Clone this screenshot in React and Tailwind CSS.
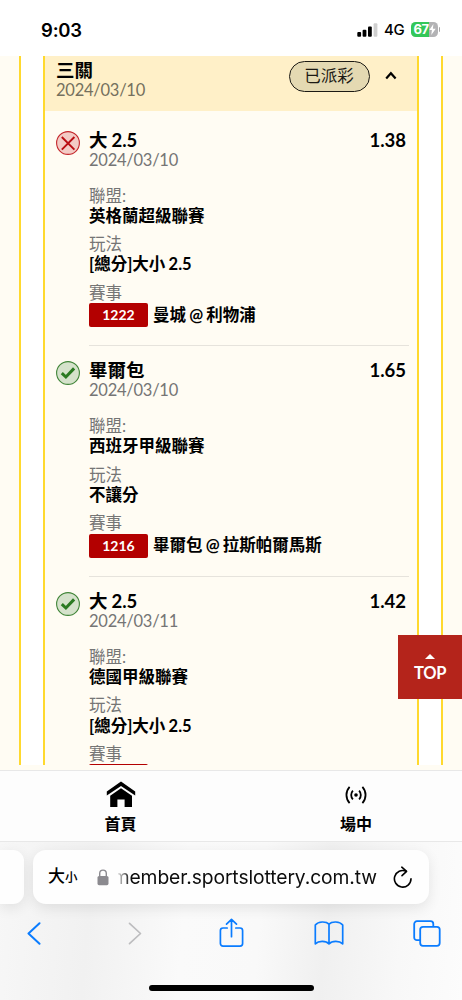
import React from "react";

const bets = [
  {
    won: false,
    title: "大 2.5",
    date: "2024/03/10",
    odds: "1.38",
    league: "英格蘭超級聯賽",
    play: "[總分]大小 2.5",
    code: "1222",
    match: "曼城 @ 利物浦",
  },
  {
    won: true,
    title: "畢爾包",
    date: "2024/03/10",
    odds: "1.65",
    league: "西班牙甲級聯賽",
    play: "不讓分",
    code: "1216",
    match: "畢爾包 @ 拉斯帕爾馬斯",
  },
  {
    won: true,
    title: "大 2.5",
    date: "2024/03/11",
    odds: "1.42",
    league: "德國甲級聯賽",
    play: "[總分]大小 2.5",
    code: "",
    match: "",
  },
];

const StatusBar = () => (
  <header className="flex h-[56px] shrink-0 items-start justify-between bg-white pl-[41px] pr-[22px] pt-[18px] font-['Inter','Liberation_Sans',sans-serif]">
    <span className="pt-[1px] text-[18.5px] font-semibold leading-[23px] tracking-[-0.2px]">9:03</span>
    <div className="flex h-[23px] items-center">
      <svg width="21" height="14" viewBox="0 0 21 14">
        <rect x="0.3" y="9" width="3.8" height="4.8" rx="1" />
        <rect x="5.6" y="6.7" width="3.8" height="7.1" rx="1" />
        <rect x="11" y="3.6" width="3.8" height="10.2" rx="1" />
        <rect x="16.6" y="0.3" width="3.8" height="13.5" rx="1" fill="#cfcfcf" />
      </svg>
      <span className="ml-[6px] text-[15px] font-medium leading-[23px] tracking-[-0.3px]">4G</span>
      <div className="ml-[6px] flex h-[15px] w-[27px] items-center rounded-[4.5px] bg-linear-to-r from-[#34c759] from-68% to-[#b3b3b5] to-68% pl-[3px]">
        <span className="text-[13px] font-bold leading-[15px] tracking-[-0.5px] text-white">67</span>
        <svg width="7" height="11" viewBox="0 0 7 11" fill="#fff">
          <path d="M4.4 0 0.3 6h2.6L2.3 11 6.7 4.7H3.9z" />
        </svg>
      </div>
      <div className="ml-[1px] h-[5px] w-[1.5px] rounded-r-full bg-[#a8a8a8]" />
    </div>
  </header>
);

const ResultIcon = ({ won }) => {
  if (won) {
    return (
      <svg width="24" height="24" viewBox="0 0 24 24" fill="none">
        <circle cx="12" cy="12" r="11.4" fill="#d5e2cb" stroke="#418538" strokeWidth="1.1" />
        <path d="m5.8 12.1 4.1 3.9 8.2-8.6" stroke="#2b7a22" strokeWidth="3" />
      </svg>
    );
  }
  return (
    <svg width="24" height="24" viewBox="0 0 24 24" fill="none">
      <circle cx="12" cy="12" r="11.4" fill="#f3cbc5" stroke="#c4262b" strokeWidth="1.1" />
      <path d="m5.8 6 12.6 12.6M18.4 6 5.8 18.6" stroke="#ba0d12" strokeWidth="1.9" />
    </svg>
  );
};

const Field = ({ label, children }) => (
  <div className="mb-[8px] text-[16.5px] leading-[20.3px]">
    <p className="text-[#757575]">{label}</p>
    <div className="font-bold [word-spacing:-0.8px]">{children}</div>
  </div>
);

const BetItem = ({ bet }) => (
  <li className="flex h-[230.6px] shrink-0 pl-[10.5px] pr-[8px]">
    <div className="w-[33.5px] shrink-0 pt-[20px]">
      <ResultIcon won={bet.won} />
    </div>
    <div className="h-[235.5px] grow border-b-[1.5px] border-[#e6e3dc] pt-[19px]">
      <div className="flex justify-between pr-[3px] text-[18.5px] font-bold leading-[20px] [word-spacing:-0.5px]">
        <span>{bet.title}</span>
        <span>{bet.odds}</span>
      </div>
      <p className="mb-[16px] text-[16.5px] leading-[20px] tracking-[-0.25px] text-[#757575]">{bet.date}</p>
      <Field label="聯盟:">{bet.league}</Field>
      <Field label="玩法">{bet.play}</Field>
      <Field label="賽事">
        <div className="flex items-center">
          <span className="h-[24px] w-[59px] rounded-[2px] bg-[#b30000] text-center text-[14px] leading-[24px] text-white">
            {bet.code}
          </span>
          <span className="ml-[5px]">{bet.match}</span>
        </div>
      </Field>
    </div>
  </li>
);

const TicketHeader = () => (
  <div className="flex h-[54.5px] shrink-0 bg-[#fff0c8] pl-[11px] pr-[20.5px]">
    <div className="grow pt-[4px]">
      <p className="text-[18.5px] font-bold leading-[20px]">三關</p>
      <p className="text-[16.5px] leading-[20px] tracking-[-0.25px] text-[#75705e]">2024/03/10</p>
    </div>
    <span className="mt-[5px] h-[31px] w-[81px] rounded-full border-[1.3px] border-[#1c1a14] bg-[#e4d9b2] text-center text-[16.5px] leading-[29px] text-[#1c1a14]">
      已派彩
    </span>
    <svg className="ml-[15px] mt-[15px]" width="12" height="9" viewBox="0 0 12 9" fill="none">
      <path d="m1.2 7.4 4.7-5.2 4.7 5.2" stroke="#000" strokeWidth="2.2" />
    </svg>
  </div>
);

const SiteNav = () => (
  <nav className="flex h-[72px] shrink-0 border-y-[1.5px] border-[#e8e8e8] bg-[#fdfdfd] text-[16px] font-bold leading-[20px]">
    <a className="flex w-[241px] shrink-0 flex-col items-center">
      <svg className="mt-[10px] mb-[6px]" width="30" height="27" viewBox="0 0 30 27">
        <path d="M15 0.5 0.8 10.6v4L15 4.9l14.2 9.7v-4z" />
        <path d="M15 7.2 4.2 14.8V26h7.2v-7.6h7.2V26h7.4V14.8z" />
      </svg>
      首頁
    </a>
    <a className="flex w-[230px] shrink-0 flex-col items-center">
      <svg className="mt-[14px] mb-[9px]" width="24" height="20" viewBox="0 0 24 20" fill="none" stroke="#000" strokeWidth="1.8">
        <circle cx="12" cy="10" r="1.8" fill="#000" stroke="none" />
        <path d="M8.9 5.6a6.5 6.5 0 0 0 0 8.8M15.1 5.6a6.5 6.5 0 0 1 0 8.8M5.6 1.9a12 12 0 0 0 0 16.2M18.4 1.9a12 12 0 0 1 0 16.2" />
      </svg>
      場中
    </a>
  </nav>
);

const AddressBar = () => (
  <div className="flex gap-[9.5px] pt-[8px]">
    <div className="h-[54px] w-[23.5px] rounded-r-[11px] bg-[#fefefe] shadow-[0_4px_14px_rgba(0,0,0,0.09)]" />
    <div className="flex h-[54px] w-[396px] items-center rounded-[13px] bg-[#fefefe] pl-[15px] shadow-[0_4px_14px_rgba(0,0,0,0.09)]">
      <span className="flex w-[49px] items-baseline font-medium leading-[24px]">
        <span className="text-[17px]">大</span>
        <span className="text-[12.5px]">小</span>
      </span>
      <svg width="12" height="17" viewBox="0 0 12 17" fill="none">
        <path d="M2.7 8V4.4a3.3 3.3 0 0 1 6.6 0V8" stroke="#8b8a8f" strokeWidth="1.4" />
        <rect x="0.5" y="7" width="11" height="9.2" rx="1.6" fill="#8b8a8f" />
      </svg>
      <div className="ml-[9px] flex w-[259px] justify-end overflow-hidden whitespace-nowrap bg-linear-to-r from-[#e4e4e4] to-[#0c0c0c] to-5% bg-clip-text font-['Inter','Liberation_Sans',sans-serif] text-[19.3px] leading-[26px] tracking-[-0.1px] text-transparent">
        member.sportslottery.com.tw
      </div>
      <svg className="ml-[16px]" width="20" height="23" viewBox="0 0 20 23" fill="none" stroke="#000" strokeWidth="1.6" strokeLinecap="round" strokeLinejoin="round">
        <path d="M13.1 5.2A8.3 8.3 0 1 0 18 12.8" />
        <path d="m8.8 1.2 4.8 4.1-4.6 4.3" />
      </svg>
    </div>
  </div>
);

const Toolbar = () => (
  <div className="flex h-[30px] items-center pl-[27px]">
    <svg width="14" height="23" viewBox="0 0 14 23" fill="none" stroke="#0a7cff" strokeWidth="2" strokeLinecap="round" strokeLinejoin="round">
      <path d="M12.5 1.3 1.5 11.5l11 10.2" />
    </svg>
    <svg className="ml-[87px]" width="14" height="23" viewBox="0 0 14 23" fill="none" stroke="#bdbdbf" strokeWidth="1.7" strokeLinecap="round" strokeLinejoin="round">
      <path d="m1.5 1.3 11 10.2-11 10.2" />
    </svg>
    <svg className="ml-[76.5px]" width="25" height="30" viewBox="0 0 25 30" fill="none" stroke="#0a7cff" strokeWidth="1.7" strokeLinecap="round" strokeLinejoin="round">
      <path d="M8.2 10H4a2.6 2.6 0 0 0-2.6 2.6v13A2.6 2.6 0 0 0 4 28.2h17a2.6 2.6 0 0 0 2.6-2.6v-13A2.6 2.6 0 0 0 21 10h-4.2M12.5 18.7V1.4M7.5 6.2l5-4.8 5 4.8" />
    </svg>
    <svg className="ml-[70px]" width="30" height="24" viewBox="0 0 30 24" fill="none" stroke="#0a7cff" strokeWidth="1.7" strokeLinejoin="round">
      <path d="M15 3.2C12.2.2 4.3.1 1.3 4v18.8c3.4-3.4 10.7-3.2 13.7 0 3-3.2 10.3-3.4 13.7 0V4C25.7.1 17.8.2 15 3.2zM15 3.2v19.6" />
    </svg>
    <svg className="ml-[69px]" width="28" height="27" viewBox="0 0 28 27" fill="none" stroke="#0a7cff" strokeWidth="1.8">
      <path d="M7.2 20.2H4a2.8 2.8 0 0 1-2.8-2.8V4A2.8 2.8 0 0 1 4 1.2h13.5A2.8 2.8 0 0 1 20.3 4v2.8" />
      <rect x="7.2" y="6.8" width="19.5" height="19" rx="2.8" />
    </svg>
  </div>
);

const App = () => {
  return (
    <div className="relative flex h-[1000px] w-[462px] flex-col overflow-hidden bg-white font-['Lato','Noto_Sans_CJK_TC',sans-serif] text-black">
      <StatusBar />
      <main className="flex h-[709px] shrink-0 bg-[#fffcf3]">
        <div className="w-[19px] shrink-0" />
        <div className="flex w-[424px] justify-center border-x-2 border-[#ffd92e] bg-white">
          <section className="flex w-[376px] flex-col overflow-hidden border-x-2 border-[#ffd92e] bg-[#fffcf3]">
            <TicketHeader />
            <ul>
              {bets.map((bet, index) => (
                <BetItem key={index} bet={bet} />
              ))}
            </ul>
          </section>
        </div>
      </main>
      <div className="h-[5px] shrink-0 bg-[#fffcf3]" />
      <SiteNav />
      <footer className="flex grow flex-col bg-[linear-gradient(95deg,#f7f7f7_0%,#f1f1f1_20%,#fafafa_40%,#f9f9f9_56%,#f0f0f0_70%,#f8f8f8_86%,#fcfcfc_100%)]">
        <AddressBar />
        <div className="mt-[14px]">
          <Toolbar />
        </div>
        <div className="mx-auto mt-[37px] h-[6px] w-[165px] rounded-full bg-black" />
      </footer>

      {/* back to top */}
      <button className="absolute right-0 top-[635px] flex h-[64px] w-[64px] flex-col items-center bg-[#b4241b] pt-[19px] text-white">
        <svg width="10" height="5" viewBox="0 0 10 5" fill="#fff">
          <path d="M5 0 10 5H0z" />
        </svg>
        <span className="mt-[4px] text-[16.5px] font-bold leading-[20px] tracking-[-0.3px]">TOP</span>
      </button>
    </div>
  );
};

export default App;
